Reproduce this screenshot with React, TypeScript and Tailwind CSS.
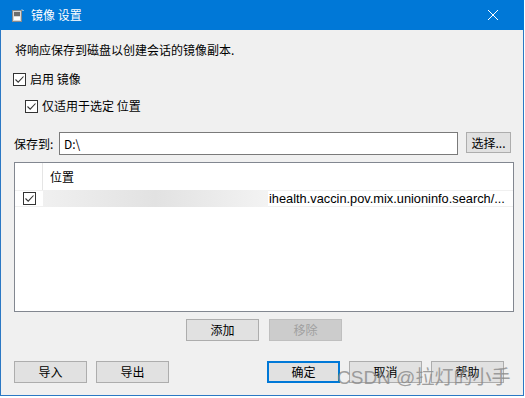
import React from "react";

const font = { fontFamily: '"Noto Sans CJK SC", "Noto Sans", sans-serif' };

function Check() {
  return (
    <span className="inline-flex w-[13px] h-[13px] border border-[#333333] bg-white items-center justify-center shrink-0">
      <svg width="11" height="11" viewBox="0 0 11 11">
        <path d="M1.5 5.5 L4.2 8.2 L9.5 2.5" fill="none" stroke="#333333" strokeWidth="1.1" />
      </svg>
    </span>
  );
}

function Btn({ children, w = "w-[73px]", disabled = false, primary = false }: { children: React.ReactNode; w?: string; disabled?: boolean; primary?: boolean }) {
  return (
    <div
      className={
        "h-[22px] flex items-center justify-center text-[12px] " +
        w +
        (disabled
          ? " bg-[#cccccc] border border-[#bfbfbf] text-[#a0a0a0]"
          : primary
          ? " bg-[#e1e1e1] border-2 border-[#0078d7] text-black"
          : " bg-[#e1e1e1] border border-[#adadad] text-black")
      }
    >
      {children}
    </div>
  );
}

export default function App() {
  return (
    <div className="w-[525px] h-[398px] bg-white relative overflow-hidden" style={font}>
      <div className="w-[524px] h-[396px] flex flex-col border-x border-b border-[#2b78c4] bg-[#f0f0f0]">
        {/* title bar */}
        <div className="h-[30px] bg-[#0078d7] flex items-center -mx-px px-[12px] shrink-0">
          <svg width="12" height="13" viewBox="0 0 12 13" className="mr-[7px]">
            <rect x="0.5" y="1.5" width="9" height="11" fill="#d8d8d8" stroke="#8a8a8a" />
            <rect x="2" y="3" width="6" height="4" fill="#6e6e6e" />
            <rect x="2" y="8" width="6" height="3" fill="#ffffff" />
            <path d="M10 0.5 L11.5 2" stroke="#ffffff" strokeWidth="1" />
          </svg>
          <span className="text-white text-[12px] leading-none">镜像 设置</span>
          <div className="flex-1" />
          <svg width="12" height="12" viewBox="0 0 12 12" className="mr-[13px]">
            <path d="M1 1 L11 11 M11 1 L1 11" stroke="#ffffff" strokeWidth="1" />
          </svg>
        </div>
        {/* body */}
        <div className="flex-1 flex flex-col px-[12px] text-[12px] text-black">
          <div className="mt-[12px] h-[16px] leading-[16px] pl-[2px]">将响应保存到磁盘以创建会话的镜像副本.</div>
          <div className="mt-[13px] h-[16px] flex items-center gap-[4px]">
            <Check />
            <span className="leading-[16px]">启用 镜像</span>
          </div>
          <div className="mt-[11px] h-[16px] flex items-center gap-[4px] pl-[12px]">
            <Check />
            <span className="leading-[16px]">仅适用于选定 位置</span>
          </div>
          <div className="mt-[18px] h-[23px] flex items-center">
            <span className="w-[46px] pl-[1px]">保存到:</span>
            <div className="w-[400px] h-[23px] bg-white border border-[#7a7a7a] flex items-center pl-[4px]">D:\</div>
            <div className="ml-[8px] w-[45px] h-[21px] bg-[#e1e1e1] border border-[#adadad] flex items-center justify-center self-start">
              选择...
            </div>
          </div>
          <div className="mt-[7px] h-[150px] bg-white border border-[#828790] flex flex-col ml-px w-[500px]">
            <div className="h-[27px] flex">
              <div className="w-[28px] border-r border-[#e5e5e5]" />
              <div className="pl-[7px] pt-[6px] leading-[16px]">位置</div>
            </div>
            <div className="h-[17px] flex items-center border-y border-[#f0f0f0]">
              <div className="w-[28px] flex justify-center">
                <Check />
              </div>
              <div className="w-[225px] h-[17px] bg-gradient-to-r from-[#f0f0f0] via-[#e2e2e2] to-[#f3f3f3]" />
              <div className="pl-[1px] whitespace-nowrap leading-[16px]" style={{ fontFamily: '"Liberation Sans", "Noto Sans", sans-serif', fontSize: 12.8 }}>
                ihealth.vaccin.pov.mix.unioninfo.search/...
              </div>
            </div>
          </div>
          <div className="mt-[7px] flex gap-[10px] pl-[173px]">
            <Btn>添加</Btn>
            <Btn disabled>移除</Btn>
          </div>
          <div className="mt-[20px] flex items-center pl-[1px]">
            <Btn>导入</Btn>
            <div className="w-[9px]" />
            <Btn>导出</Btn>
            <div className="flex-1" />
            <Btn primary>确定</Btn>
            <div className="w-[9px]" />
            <Btn>取消</Btn>
            <div className="w-[9px]" />
            <Btn>帮助</Btn>
            <div className="w-[7px]" />
          </div>
        </div>
      </div>
      <div
        className="absolute left-[337px] top-[366px] text-[19px] leading-[24px] text-[#8a8a8a] opacity-80 whitespace-nowrap"
        style={{ fontFamily: '"Liberation Sans", "Noto Sans CJK SC", sans-serif' }}
      >
        CSDN @拉灯的小手
      </div>
    </div>
  );
}
